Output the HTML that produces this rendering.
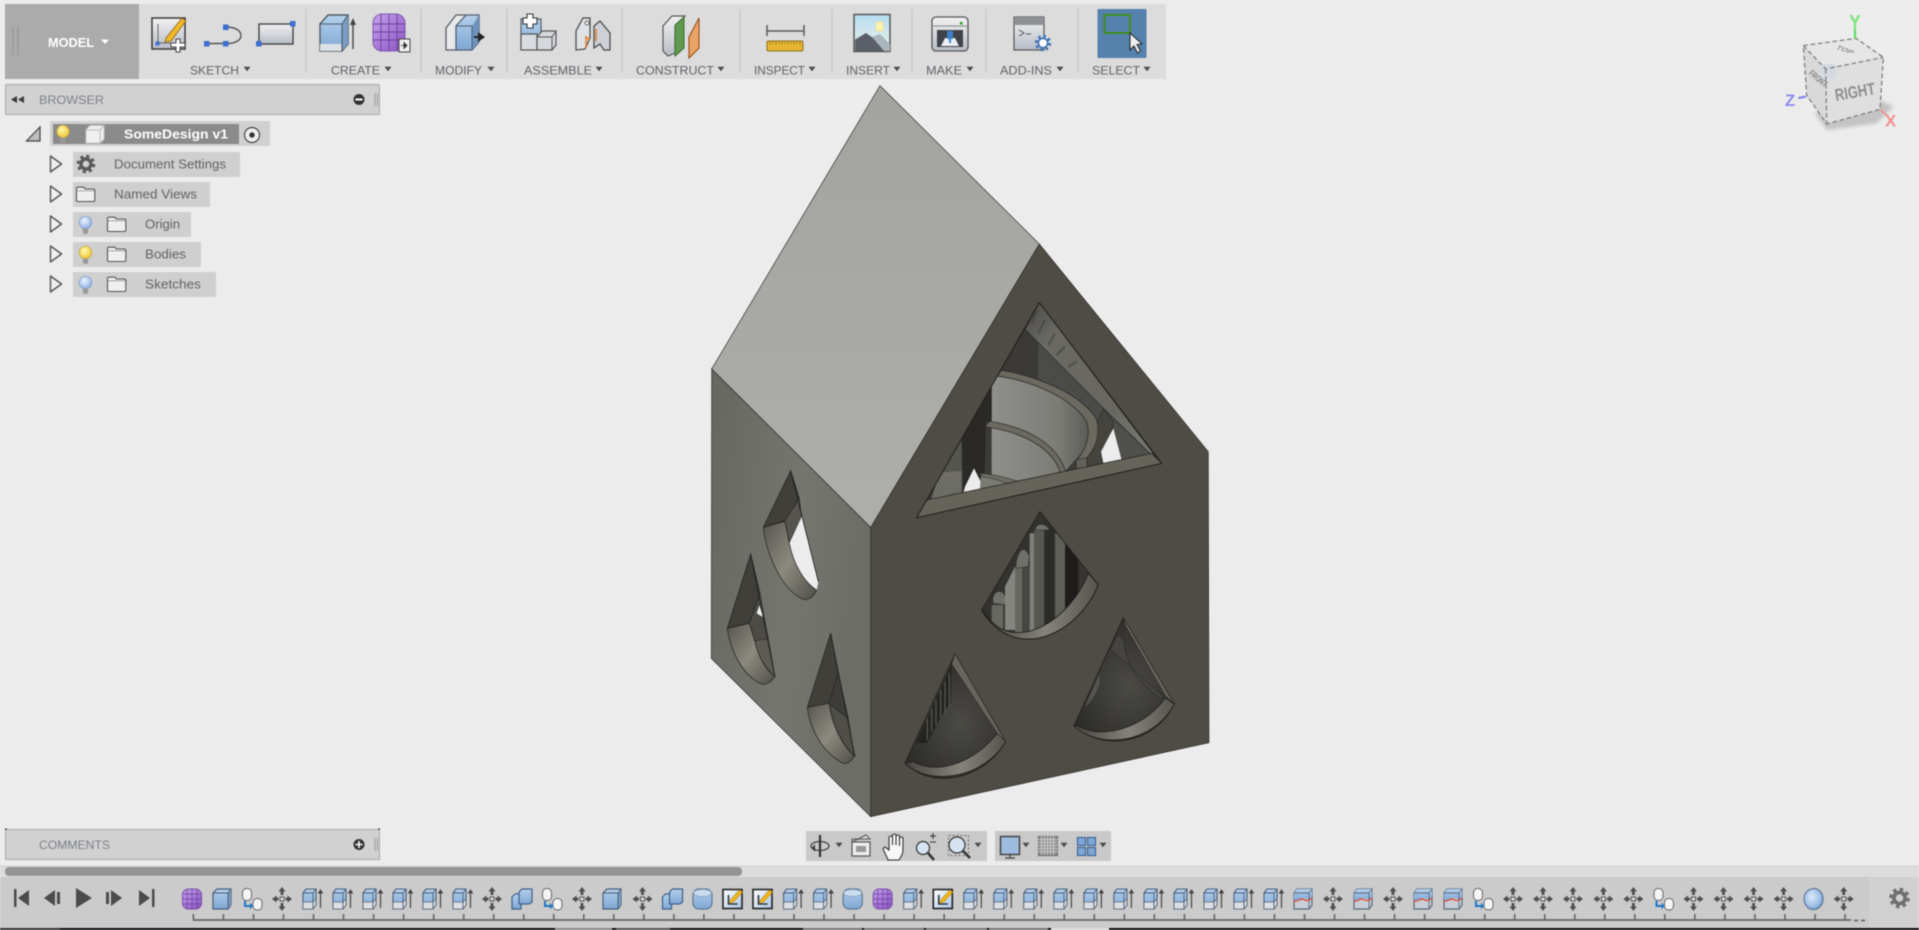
<!DOCTYPE html>
<html lang="en"><head><meta charset="utf-8"><title>SomeDesign v1</title>
<style>
html,body{margin:0;padding:0;background:#ececec;width:1919px;height:930px;overflow:hidden}
svg{display:block;position:absolute;left:0;top:0;filter:blur(.55px)}
text{font-family:"Liberation Sans",sans-serif}
.l{font-size:12px;fill:#5f6268}
.t{font-size:12.5px;fill:#636363}
</style></head><body>
<svg xmlns="http://www.w3.org/2000/svg" width="1919" height="930" viewBox="0 0 1919 930">
<defs>
<linearGradient id="bl" x1="0" y1="0" x2="0" y2="1"><stop offset="0" stop-color="#b4d0ec"/><stop offset="1" stop-color="#7fa8d4"/></linearGradient>
<linearGradient id="gy" x1="0" y1="0" x2="0" y2="1"><stop offset="0" stop-color="#f2f2f2"/><stop offset="1" stop-color="#b7bcc6"/></linearGradient>
<linearGradient id="roof" x1="0" y1="0" x2="0" y2="1"><stop offset="0" stop-color="#a3a39f"/><stop offset="1" stop-color="#aeaeaa"/></linearGradient>
<linearGradient id="lf" x1="0" y1="0" x2="1" y2=".3"><stop offset="0" stop-color="#676761"/><stop offset=".6" stop-color="#767670"/><stop offset="1" stop-color="#6d6d67"/></linearGradient>
<linearGradient id="rim" x1="0" y1="0" x2="1" y2="1"><stop offset="0" stop-color="#56554f"/><stop offset=".5" stop-color="#8c8a7f"/><stop offset="1" stop-color="#4f4e48"/></linearGradient>
<linearGradient id="rim2" x1="0" y1="0" x2="1" y2="0"><stop offset="0" stop-color="#45443e"/><stop offset=".55" stop-color="#85837a"/><stop offset="1" stop-color="#55544d"/></linearGradient>
<linearGradient id="spir" x1="0" y1="0" x2="1" y2="0"><stop offset="0" stop-color="#8f908b"/><stop offset=".7" stop-color="#7b7c76"/><stop offset="1" stop-color="#5c5c57"/></linearGradient>
<radialGradient id="dk" cx=".55" cy=".55" r=".6"><stop offset="0" stop-color="#4b4a45"/><stop offset="1" stop-color="#2d2c29"/></radialGradient>
<linearGradient id="slat" x1="0" y1="0" x2="1" y2="1"><stop offset="0" stop-color="#4a4945"/><stop offset=".22" stop-color="#6a6964"/><stop offset=".7" stop-color="#686761"/><stop offset="1" stop-color="#7a7a74"/></linearGradient>
<radialGradient id="yb" cx=".4" cy=".35" r=".7"><stop offset="0" stop-color="#fff7b0"/><stop offset="1" stop-color="#ecc52e"/></radialGradient>
<radialGradient id="bb" cx=".4" cy=".35" r=".7"><stop offset="0" stop-color="#eef4ff"/><stop offset="1" stop-color="#8cafe6"/></radialGradient>
<radialGradient id="sp" cx=".4" cy=".4" r=".65"><stop offset="0" stop-color="#dbe9f8"/><stop offset=".7" stop-color="#9dbfe6"/><stop offset="1" stop-color="#6d97c9"/></radialGradient>
<linearGradient id="pu" x1="0" y1="0" x2="1" y2="1"><stop offset="0" stop-color="#c5a3ea"/><stop offset="1" stop-color="#8c54c4"/></linearGradient>
<linearGradient id="sk" x1="0" y1="0" x2="1" y2="1"><stop offset="0" stop-color="#fff"/><stop offset="1" stop-color="#a9c6e6"/></linearGradient>
<linearGradient id="sky" x1="0" y1="0" x2="0" y2="1"><stop offset="0" stop-color="#b5dcf2"/><stop offset="1" stop-color="#eef3e4"/></linearGradient>
<pattern id="tick" x="192.6" y="0" width="30.03" height="10" patternUnits="userSpaceOnUse"><rect x="0" y="0" width="1.6" height="10" fill="#666"/></pattern>

<g id="form"><rect x="-9.500" y="-10" width="19" height="20" rx="6" fill="url(#pu)" stroke="#7a4fa8"/><path d="M-9,-5H9M-9,0H9M-9,5H9M-5,-10V10M0,-10V10M5,-10V10" stroke="#6a3fa0" stroke-width=".7" fill="none"/></g>
<g id="box"><path d="M-9,-6L-5,-10H9V6L6,10H-9Z" fill="url(#bl)" stroke="#4a5f78" stroke-width="1.2"/><path d="M6,-6L9,-10V6L6,10Z" fill="#7799c0"/><path d="M-9,-6H6V10M6,-6L9,-10" fill="none" stroke="#4a5f78" stroke-width="1"/></g>
<g id="ext"><path d="M-9,-6L-6,-10H4V6L1,10H-9Z" fill="url(#bl)" stroke="#4a5f78" stroke-width="1.1"/><path d="M-9,3H1L4,0V6L1,10H-9Z" fill="#dcdfe3" stroke="#5a6673" stroke-width=".8"/><path d="M1,-6V10M-9,-6H1L4,-10" fill="none" stroke="#4a5f78" stroke-width=".9"/><path d="M8.500,9V-6" stroke="#444" stroke-width="1.2"/><path d="M5.700,-5.500L8.500,-10L11.300,-5.500Z" fill="#444"/></g>
<g id="mv" fill="#4f4f4f"><rect x="-2" y="-2" width="4" height="4" fill="#ddd" stroke="#555" stroke-width="1"/><path d="M0,-12L3.500,-7.500H1.400V-4H-1.400V-7.500H-3.500ZM0,12L3.500,7.500H1.400V4H-1.400V7.500H-3.500ZM-10,0L-5.500,-3.500V-1.400H-3.500V1.400H-5.500V3.500ZM10,0L5.500,-3.500V-1.400H3.500V1.400H5.500V3.500Z"/></g>
<g id="lnk"><rect x="-9.500" y="-10.500" width="9" height="12" rx="4" fill="#f4f4f4" stroke="#666" stroke-width="1"/><rect x="1" y="-.5" width="9" height="11.500" rx="4" fill="#f4f4f4" stroke="#666" stroke-width="1"/><path d="M-7,2V7H-1" fill="none" stroke="#1f75c8" stroke-width="2"/><path d="M-2,3.500L1,7L-2,10.500Z" fill="#1f75c8"/></g>
<g id="cmb"><path d="M-10,-2L-7,-5H-1V10H-10Z" fill="url(#bl)" stroke="#3f5f88" stroke-width="1.2"/><path d="M-3,-7L0,-10H10V3L7,5H-3Z" fill="url(#bl)" stroke="#3f5f88" stroke-width="1.2"/></g>
<g id="cyl"><rect x="-9.500" y="-10" width="19" height="20" rx="6" fill="url(#bl)" stroke="#5c7590" stroke-width="1.2"/><ellipse cx="0" cy="-6" rx="9" ry="3.600" fill="#c9dcf0" stroke="#7f97b3" stroke-width=".7"/></g>
<g id="skt"><rect x="-9.500" y="-9.500" width="19" height="19" fill="url(#sk)" stroke="#222" stroke-width="1.6"/><path d="M-4,-4V5H5" fill="none" stroke="#333" stroke-width="1.6"/><path d="M-2,1L7,-9L10,-7L1,3L-3,4Z" fill="#f2b81a" stroke="#b98410" stroke-width=".6"/></g>
<g id="red"><path d="M-9,-6L-6,-10H9V6L6,10H-9Z" fill="#c9ced6" stroke="#5a6a7c" stroke-width="1.2"/><path d="M-9,-6L-6,-10H9L9,-1C5,3 3,-2 -1,-1C-4,1 -6,2 -9,1Z" fill="url(#bl)"/><path d="M-9,-6H6V10M6,-6L9,-10" fill="none" stroke="#5a6a7c" stroke-width=".9"/><path d="M-9,2C-6,3 -4,0 -1,0C2,0 3,3 6,1L9,-1" fill="none" stroke="#e0402a" stroke-width="1.2"/></g>
<g id="sph"><ellipse cx="0" cy="0" rx="9.500" ry="10.500" fill="url(#sp)" stroke="#5f7a99" stroke-width="1.2"/></g>
<g id="bulbY"><circle cx="0" cy="-2.500" r="6.200" fill="url(#yb)" stroke="#c8a422" stroke-width=".7"/><path d="M-2.600,3.500H2.600V8L1,9H-1L-2.600,8Z" fill="#999"/></g>
<g id="bulbB"><circle cx="0" cy="-2.500" r="6.200" fill="url(#bb)" stroke="#7393c8" stroke-width=".7"/><path d="M-2.600,3.500H2.600V8L1,9H-1L-2.600,8Z" fill="#999"/></g>
<g id="fld"><path d="M.5,14.500V1.500L1.500,.7H8L9.200,2.500H18L18.800,3.500V14L18,15H1.500Z" fill="#efefef" stroke="#555" stroke-width="1.1"/><path d="M1,4.300H18.500" stroke="#777" stroke-width=".7"/></g>
<g id="exp"><path d="M0,0L11,8L0,16Z" fill="#efefef" stroke="#555" stroke-width="1.400" stroke-linejoin="round"/></g>
<g id="gear" fill="none" stroke="#595959"><circle r="7.800" stroke-width="3" stroke-dasharray="3.100 3.030"/><circle r="5" stroke-width="3.400"/></g>
<g id="arr"><path d="M-3.500,-2.300H3.500L0,2.300Z" fill="#4a4a4a"/></g>
</defs>

<rect width="1919" height="930" fill="#ececec"/>

<!-- HOUSE -->
<polygon points="880,85.700 1039.300,244 870.700,527.500 711.700,369" fill="url(#roof)" stroke="#33332f" stroke-width=".7"/>
<polygon points="711.700,369 870.700,527.500 870.700,816.700 711.300,658.300" fill="url(#lf)" stroke="#2f2f2b" stroke-width=".7"/>
<polygon points="1039.300,244 1208.300,451.700 1209,742.700 870.700,816.700 870.700,527.500" fill="#4f4c45" stroke="#2f2e2a" stroke-width=".7"/>

<!-- triangular window -->
<g transform="translate(940,290) scale(.33333)">
<clipPath id="tw"><polygon points="298,38 665,520 -70,683"/></clipPath>
<polygon points="298,38 665,520 -70,683" fill="#3c3b37" stroke="#1f1e1c" stroke-width="3"/>
<g clip-path="url(#tw)">
<polygon points="295,160 490,355 640,490 530,510 470,390 295,265" fill="#4b4c49"/>
<polygon points="255,118 295,160 295,265 185,240" fill="#3b3a36"/>
<polygon points="520,395 640,490 545,510" fill="#4f504c"/>
<path d="M298,38L255,118L490,355L630,490L640,490Z" fill="url(#slat)" stroke="#222" stroke-width="2"/>
<path d="M290,62L275,100M315,90L295,130M345,130L325,165M375,170L350,195M410,215L385,230" stroke="#3f3e3a" stroke-width="7" opacity=".55"/>
<path d="M155,258L178,258C290,275 400,330 440,395C455,440 430,490 405,510L370,550L250,575L155,590Z" fill="url(#spir)"/>
<path d="M184,241C290,258 420,310 468,385C490,440 460,480 440,505L410,510C430,490 455,440 440,395C400,330 290,275 172,258Z" fill="#6b6960" stroke="#222" stroke-width="2"/>
<path d="M148,394C240,408 350,450 378,548L362,552C340,470 240,425 135,410Z" fill="#6b6960" stroke="#222" stroke-width="2"/>
<polygon points="408,510 440,503 442,530 410,540" fill="#64625a" stroke="#222" stroke-width="1.500"/>
<path d="M490,355L520,395L515,430L483,485L490,520L442,530L440,505C462,480 478,450 472,395Z" fill="#45433e" stroke="#1f1e1c" stroke-width="1.500"/>
<polygon points="520,415 545,510 490,520 483,485" fill="#ececec"/>
<polygon points="155,290 155,395 138,395 135,540 122,570 102,535 90,555 70,612 65,450" fill="#2a2926"/>
<polygon points="102,535 122,575 120,605 68,618 75,590" fill="#ececec"/>
<polygon points="122,550 250,575 120,605" fill="#7a7b75"/>
<path d="M125,550C170,555 210,565 245,578L210,585C180,570 150,562 122,560Z" fill="#6f6d64" stroke="#222" stroke-width="1.500"/>
<polygon points="65,450 5,552 65,540" fill="#55554f"/>
<polygon points="-5,560 65,558 65,625 -30,640" fill="#6d6d67"/>
<polygon points="0,548 65,542 65,558 -8,562" fill="#6f6d64"/>
<polygon points="-70,683 665,520 635,490 -40,630" fill="#66635a" stroke="#1f1e1c" stroke-width="2"/>
</g>
<polygon points="298,38 665,520 -70,683" fill="none" stroke="#1f1e1c" stroke-width="2.500"/>
</g>

<!-- sector holes -->
<g transform="translate(700,450) scale(.33333)">
<!-- A -->
<clipPath id="ha"><path d="M1020,185L1195,405C1130,560 940,640 845,480Z"/></clipPath>
<path d="M1020,185L1195,405C1130,560 940,640 845,480Z" fill="#3a3935"/>
<g clip-path="url(#ha)">
<rect x="840" y="180" width="360" height="400" fill="#33322e"/>
<rect x="875" y="465" width="35" height="90" fill="#686862"/>
<path d="M880,460C870,430 905,405 918,445L918,465Z" fill="#70706a" stroke="#222" stroke-width="1.500"/>
<polygon points="915,410 945,350 945,540 915,540" fill="#858580"/>
<rect x="945" y="350" width="22" height="200" fill="#686862"/>
<rect x="967" y="350" width="22" height="200" fill="#474642"/>
<path d="M948,355C945,320 970,270 988,320L985,350Z" fill="#70706a" stroke="#222" stroke-width="1.500"/>
<rect x="989" y="250" width="14" height="300" fill="#7f7f7a"/>
<rect x="1003" y="240" width="30" height="300" fill="#575752"/>
<rect x="1033" y="230" width="32" height="300" fill="#2c2b28"/>
<rect x="1065" y="250" width="30" height="280" fill="#5f5f59"/>
<rect x="1095" y="290" width="40" height="230" fill="#1e1d1b"/>
<rect x="1135" y="320" width="40" height="170" fill="#363532"/>
<path d="M1005,240C1010,215 1040,220 1048,240Z" fill="#70706a" stroke="#222" stroke-width="1.500"/>
</g>
<path d="M1195,405L1165,370C1110,510 960,600 875,515L845,480C940,640 1130,560 1195,405Z" fill="url(#rim2)" stroke="#1e1d1b" stroke-width="2.500"/>
<path d="M1020,185L1195,405C1130,560 940,640 845,480Z" fill="none" stroke="#1e1d1b" stroke-width="2.500"/>
<!-- B -->
<path d="M765,612L917,875C850,990 700,1020 615,940Z" fill="url(#dk)" stroke="#1e1d1b" stroke-width="2.500"/>
<path d="M755,645L752,760L735,780L680,880L648,878Z" fill="#24231f"/>
<path d="M748,670V770M735,695V790M722,720V805M708,750V825M695,775V845M682,805V870" stroke="#55554f" stroke-width="4"/>
<path d="M765,612L917,875L892,850L755,642Z" fill="#66645c" stroke="#1e1d1b" stroke-width="1.500"/>
<path d="M917,875L892,850C830,930 720,980 640,935L615,940C690,1010 850,985 917,875Z" fill="url(#rim2)" stroke="#1e1d1b" stroke-width="2"/>
<!-- C -->
<path d="M1270,503L1423,762C1360,890 1200,900 1122,828Z" fill="url(#dk)" stroke="#1e1d1b" stroke-width="2.500"/>
<path d="M1232,598L1393,742L1380,745C1310,690 1280,650 1272,570L1252,555Z" fill="#45443f" stroke="#1e1d1b" stroke-width="1.500"/>
<path d="M1198,675C1205,705 1180,750 1155,770L1175,725Z" fill="#55544e"/>
<path d="M1270,503L1423,762L1395,735L1278,530Z" fill="#66645c" stroke="#1e1d1b" stroke-width="1.500"/>
<path d="M1423,762L1395,745C1350,815 1220,880 1130,826L1122,828C1200,900 1360,880 1423,762Z" fill="url(#rim2)" stroke="#1e1d1b" stroke-width="2"/>
<!-- D -->
<path d="M272,62L190,232L255,212L298,145Z" fill="#403f3a" stroke="#1e1d1b" stroke-width="2"/>
<path d="M298,145L255,212L268,278L305,200Z" fill="#55544e" stroke="#1e1d1b" stroke-width="1.500"/>
<path d="M305,200L355,395L350,422C310,395 280,340 268,280Z" fill="#ececec"/>
<path d="M190,232L255,214L268,280C280,340 310,395 350,420Q335,450 312,449C250,425 200,320 190,232Z" fill="url(#rim)" stroke="#1e1d1b" stroke-width="2"/>
<path d="M272,62L355,395" stroke="#1e1d1b" stroke-width="2.500"/>
<!-- E -->
<path d="M152,312L82,534L148,520L180,430Z" fill="#403f3a" stroke="#1e1d1b" stroke-width="2"/>
<path d="M180,430L148,520L165,572L205,566Z" fill="#4c4b46" stroke="#1e1d1b" stroke-width="1.500"/>
<polygon points="178,466 190,502 170,490" fill="#ececec"/>
<path d="M165,572L205,566L225,680C195,650 172,620 165,572Z" fill="#5c5b54" stroke="#1e1d1b" stroke-width="1.500"/>
<path d="M82,535L148,520L165,575C175,625 200,660 225,680Q205,707 185,702C130,680 90,600 82,535Z" fill="url(#rim)" stroke="#1e1d1b" stroke-width="2"/>
<path d="M152,312L225,680" stroke="#1e1d1b" stroke-width="2.500"/>
<!-- F -->
<path d="M392,550L322,772L387,760L415,670Z" fill="#403f3a" stroke="#1e1d1b" stroke-width="2"/>
<path d="M415,670L387,760L445,805Z" fill="#3d3c38" stroke="#1e1d1b" stroke-width="1.500"/>
<path d="M390,765L445,805L463,918C425,880 400,820 390,765Z" fill="#4f4e48" stroke="#1e1d1b" stroke-width="1.500"/>
<path d="M322,772L387,760C395,820 420,880 463,918Q450,942 430,940C370,910 330,840 322,772Z" fill="url(#rim)" stroke="#1e1d1b" stroke-width="2"/>
<path d="M392,550L465,920" stroke="#1e1d1b" stroke-width="2.500"/>
</g>

<!-- TOOLBAR -->
<rect x="5" y="4" width="1161" height="75" fill="#dcdcdc"/>
<rect x="5" y="4" width="134" height="75" fill="#ababab"/>
<path d="M13,27V55M18,27V55" stroke="#979797" stroke-width="1.300"/>
<text x="48" y="47" font-size="12.500" font-weight="bold" fill="#fff" textLength="46" lengthAdjust="spacingAndGlyphs">MODEL</text>
<path d="M101,39.500H109L105,44Z" fill="#fff"/>
<path d="M306,9V73M421,9V73M507,9V73M622,9V73M740,9V73M832,9V73M912,9V73M986,9V73M1078,9V73" stroke="#c6c6c6" stroke-width="1.400"/>
<text class="l" x="190" y="74.500" textLength="49" lengthAdjust="spacingAndGlyphs">SKETCH</text>
<text class="l" x="331" y="74.500" textLength="49" lengthAdjust="spacingAndGlyphs">CREATE</text>
<text class="l" x="435" y="74.500" textLength="47" lengthAdjust="spacingAndGlyphs">MODIFY</text>
<text class="l" x="524" y="74.500" textLength="68" lengthAdjust="spacingAndGlyphs">ASSEMBLE</text>
<text class="l" x="636" y="74.500" textLength="78" lengthAdjust="spacingAndGlyphs">CONSTRUCT</text>
<text class="l" x="754" y="74.500" textLength="51" lengthAdjust="spacingAndGlyphs">INSPECT</text>
<text class="l" x="846" y="74.500" textLength="44" lengthAdjust="spacingAndGlyphs">INSERT</text>
<text class="l" x="926" y="74.500" textLength="36" lengthAdjust="spacingAndGlyphs">MAKE</text>
<text class="l" x="1000" y="74.500" textLength="52" lengthAdjust="spacingAndGlyphs">ADD-INS</text>
<text class="l" x="1092" y="74.500" textLength="48" lengthAdjust="spacingAndGlyphs">SELECT</text>
<use href="#arr" x="247" y="69"/><use href="#arr" x="388" y="69"/><use href="#arr" x="491" y="69"/><use href="#arr" x="599" y="69"/><use href="#arr" x="721" y="69"/><use href="#arr" x="812" y="69"/><use href="#arr" x="897" y="69"/><use href="#arr" x="970" y="69"/><use href="#arr" x="1060" y="69"/><use href="#arr" x="1147" y="69"/>

<!-- sketch icons -->
<rect x="152" y="18" width="33" height="31" fill="url(#gy)" stroke="#3a3a3a" stroke-width="1.500"/>
<path d="M158,24V43H176" fill="none" stroke="#666" stroke-width="1"/>
<path d="M166,38L182,18L186,21L171,41L165,42Z" fill="#f0b72a" stroke="#8a6414" stroke-width=".8"/>
<rect x="155.500" y="41.500" width="4" height="4" fill="#3b6fd0"/>
<path d="M176,39h4v4h5v4h-5v5h-4v-5h-5v-4h5z" fill="#fff" stroke="#444" stroke-width="1"/>
<path d="M206,43.500H226C246,44 246,27 226,27" fill="none" stroke="#555" stroke-width="1.400"/>
<rect x="204" y="41" width="5.500" height="5.500" fill="#3b6fd0"/><rect x="223" y="41" width="5.500" height="5.500" fill="#3b6fd0"/><rect x="223" y="24.500" width="5.500" height="5.500" fill="#3b6fd0"/>
<rect x="259" y="24" width="34" height="20" fill="url(#gy)" stroke="#3a3a3a" stroke-width="1.300"/>
<rect x="256" y="41" width="5.500" height="5.500" fill="#3b6fd0"/><rect x="290" y="21" width="5.500" height="5.500" fill="#3b6fd0"/>

<!-- create -->
<path d="M320,24L328,15H348V44L342,51H320Z" fill="url(#bl)" stroke="#4f5a66" stroke-width="1.400"/>
<path d="M342,24L348,15V44L342,51Z" fill="#7b9cc4"/>
<path d="M320,44H342V51H320Z" fill="#dde0e4"/>
<path d="M320,24H342V51M342,24L348,15" fill="none" stroke="#4f5a66" stroke-width="1.100"/>
<path d="M353,49V24" stroke="#444" stroke-width="1.400"/><path d="M350,25L353,18L356,25Z" fill="#444"/>
<rect x="373" y="14" width="32" height="37" rx="9" fill="url(#pu)" stroke="#8358b2" stroke-width="1"/>
<path d="M373,24H405M373,32H405M373,40H405M381,14V51M389,14V51M397,14V51" stroke="#6b3fa0" stroke-width=".9"/>
<rect x="399" y="39" width="11" height="13" fill="#eee" stroke="#444" stroke-width="1"/><path d="M401,45.500H405M404,42.500L407,45.500L404,48.500Z" fill="#333" stroke="#333" stroke-width=".8"/>

<!-- modify -->
<path d="M446,50V28L456,15H466L458,28V50Z" fill="#e6e8ea" stroke="#5a5f66" stroke-width="1.300"/>
<path d="M456,50V26L466,15H479V42L472,50Z" fill="url(#bl)" stroke="#4f5f75" stroke-width="1.300"/>
<path d="M472,26L479,15V42L472,50Z" fill="#6f93bf"/><path d="M456,26H472V50" fill="none" stroke="#4f5f75"/>
<path d="M474,36h4v-4l7,5l-7,5v-4h-4z" fill="#222"/>

<!-- assemble -->
<rect x="521" y="19" width="20" height="30" fill="url(#bl)" stroke="#5a5f66" stroke-width="1.200"/>
<rect x="521" y="34" width="16" height="16" fill="#d8dbe0" stroke="#555" stroke-width="1.200"/>
<path d="M537,37L542,31H556V45L552,50H537Z" fill="#d5d8dd" stroke="#555" stroke-width="1.200"/><path d="M537,37H552V50M552,37L556,31" fill="none" stroke="#555"/>
<path d="M523,18h4v-4h6v4h4v6h-4v4h-6v-4h-4z" fill="#fff" stroke="#333" stroke-width="1.100"/>
<path d="M576,50V31L583,18H590V38L585,49Z" fill="#dfe2e6" stroke="#444" stroke-width="1.200"/>
<path d="M594,48V26L600,21L610,33V50H604L600,44Z" fill="#cdd1d7" stroke="#444" stroke-width="1.200"/>
<path d="M590,40L586,37M596,29V41M586,36V48" stroke="#e8771e" stroke-width="1.400"/>
<circle cx="587" cy="23" r="2" fill="#eee" stroke="#444" stroke-width=".8"/>

<!-- construct -->
<path d="M663,51V26L672,16H685L675,26V53L668,56Z" fill="url(#gy)" stroke="#555" stroke-width="1.200"/>
<path d="M675,25L684,17V48L675,56Z" fill="#5f9a4e" stroke="#3d6b33" stroke-width="1"/>
<path d="M689,37L699,18V48L689,58Z" fill="#e9a468" stroke="#a0541e" stroke-width="1.200"/>

<!-- inspect -->
<path d="M767,31H804M767,25V36M804,25V36" stroke="#5a5a5a" stroke-width="1.500" fill="none"/>
<rect x="767" y="41" width="36" height="10" rx="1.500" fill="#e8b532" stroke="#8f7020" stroke-width="1"/>
<path d="M770,41v4M773,41v3M776,41v4M779,41v3M782,41v4M785,41v3M788,41v4M791,41v3M794,41v4M797,41v3M800,41v4" stroke="#8f7020" stroke-width=".7"/>

<!-- insert -->
<rect x="854" y="14.500" width="36" height="37" fill="url(#sky)" stroke="#4f4f4f" stroke-width="1.400"/>
<rect x="876" y="22" width="7" height="9" fill="#fdf2a8" stroke="#e7e0b0"/>
<path d="M855,50V39L866,33L872,37L880,34L890,44V51Z" fill="#a9b6bd"/>
<path d="M855,51V40L866,33L873,38L884,51Z" fill="#5b5f68"/>

<!-- make -->
<rect x="932" y="17" width="36" height="34" rx="4" fill="url(#gy)" stroke="#555" stroke-width="1.300"/>
<path d="M932,26H968" stroke="#888"/>
<rect x="937" y="30" width="26" height="17" fill="#3f4247"/>
<path d="M941,46L945,38H955L959,46Z" fill="#eceff2"/>
<rect x="947" y="31" width="6" height="8" fill="#3f80c8"/><path d="M950,39V43" stroke="#3f80c8" stroke-width="2"/>
<rect x="960" y="22" width="2.500" height="2.500" fill="#1fa01f"/>

<!-- add-ins -->
<rect x="1014" y="17" width="30" height="33" fill="url(#gy)" stroke="#555" stroke-width="1.200"/>
<rect x="1014" y="17" width="30" height="8" fill="#8e9096"/>
<path d="M1019,30L1024,33L1019,36M1026,34H1031" fill="none" stroke="#555" stroke-width="1"/>
<g transform="translate(1043,43) scale(.85)"><circle r="8" fill="none" stroke="#3f74b8" stroke-width="3.400" stroke-dasharray="3 3.300"/><circle r="5.500" fill="#fff" stroke="#3f74b8" stroke-width="2"/></g>

<!-- select -->
<rect x="1097.500" y="9" width="49" height="49" rx="1" fill="#5482ad"/>
<rect x="1104.500" y="15" width="25.500" height="18" fill="none" stroke="#3f8f1f" stroke-width="2"/>
<path d="M1130,33V50L1134,46L1137.500,53L1140.500,51L1137,44.500L1142,44Z" fill="#eee" stroke="#222" stroke-width="1"/>

<!-- BROWSER -->
<rect x="5.500" y="84.500" width="374" height="30" rx="1" fill="#d1d1d1" stroke="#a9a9a9"/>
<path d="M11,99.500L17,96V103ZM18,99.500L24,96V103Z" fill="#3a3a3a"/>
<text x="39" y="104" font-size="12" fill="#7d8188" textLength="65" lengthAdjust="spacingAndGlyphs">BROWSER</text>
<circle cx="359" cy="99.500" r="5.500" fill="#333"/><rect x="355.500" y="98.500" width="7" height="2" fill="#fff"/>
<path d="M375,93V106M377.500,93V106" stroke="#9c9c9c"/>

<path d="M26.500,141L40,127V141Z" fill="#bdbdbd" stroke="#444" stroke-width="1.200"/>
<rect x="50" y="121" width="220" height="25" fill="#d0d0d0"/>
<rect x="53" y="124" width="186" height="20" fill="#8b8b8b"/>
<use href="#bulbY" x="63" y="134"/>
<path d="M86,130L90,125.500H104V139L100,143H86Z" fill="#efefef" stroke="#c8c8c8"/><path d="M100,130V143M100,130L104,125.500M86,130H100" stroke="#bbb" fill="none"/>
<text x="124" y="138.500" font-size="12.500" font-weight="bold" fill="#fff" textLength="104" lengthAdjust="spacingAndGlyphs">SomeDesign v1</text>
<circle cx="252" cy="135" r="7.500" fill="#eee" stroke="#444" stroke-width="1.200"/><circle cx="252" cy="135" r="2.700" fill="#333"/>

<g fill="#cfcfcf">
<rect x="73" y="152" width="167" height="25"/><rect x="73" y="182" width="137" height="25"/><rect x="73" y="212" width="118" height="25"/><rect x="73" y="242" width="128" height="25"/><rect x="73" y="272" width="143" height="25"/>
</g>
<use href="#exp" x="50.500" y="156"/><use href="#exp" x="50.500" y="186"/><use href="#exp" x="50.500" y="216"/><use href="#exp" x="50.500" y="246"/><use href="#exp" x="50.500" y="276"/>
<use href="#gear" x="86" y="164"/>
<use href="#fld" x="76" y="186.500"/>
<use href="#bulbB" x="85.500" y="225"/><use href="#fld" x="107" y="216.500"/>
<use href="#bulbY" x="85.500" y="255"/><use href="#fld" x="107" y="246.500"/>
<use href="#bulbB" x="85.500" y="285"/><use href="#fld" x="107" y="276.500"/>
<text class="t" x="114" y="168.500" textLength="112" lengthAdjust="spacingAndGlyphs">Document Settings</text>
<text class="t" x="114" y="198.500" textLength="83" lengthAdjust="spacingAndGlyphs">Named Views</text>
<text class="t" x="145" y="228.500" textLength="35" lengthAdjust="spacingAndGlyphs">Origin</text>
<text class="t" x="145" y="258.500" textLength="41" lengthAdjust="spacingAndGlyphs">Bodies</text>
<text class="t" x="145" y="288.500" textLength="56" lengthAdjust="spacingAndGlyphs">Sketches</text>

<!-- COMMENTS -->
<rect x="5.500" y="829.500" width="374" height="30" fill="#d1d1d1" stroke="#a9a9a9"/>
<path d="M5,829h2M378,829h2" stroke="#222"/>
<text x="39" y="849" font-size="12" fill="#7d8188" textLength="71" lengthAdjust="spacingAndGlyphs">COMMENTS</text>
<circle cx="359" cy="844.500" r="5.500" fill="#333"/><path d="M355.500,844.500h7M359,841v7" stroke="#fff" stroke-width="1.600"/>
<path d="M375,838V851M377.500,838V851" stroke="#9c9c9c"/>

<!-- VIEW BAR -->
<rect x="806" y="831" width="181" height="30" fill="#c9c9c9"/><rect x="995" y="831" width="116" height="30" fill="#c9c9c9"/>
<g transform="translate(820,846)">
<ellipse rx="9" ry="4.500" fill="none" stroke="#444" stroke-width="1.300"/><path d="M0,-11V11" stroke="#333" stroke-width="2.200"/><path d="M-8,2L-5,-2V6Z" fill="#333"/>
</g>
<use href="#arr" x="839" y="845"/>
<path d="M852,842L866,835L870,839H852Z" fill="#ddd" stroke="#555"/><rect x="852" y="842" width="18" height="14" fill="#eee" stroke="#555" stroke-width="1.200"/><rect x="856" y="846" width="10" height="6" fill="#999"/>
<path d="M888,860C885,852 881,848 885,847L889,850V837Q891,835 892.500,837V845V835Q894.500,833 896,835V845V836Q898,834 899.500,836V846V838Q901.500,836 903,838V850C903,855 900,858 899,860Z" fill="#f7f7f7" stroke="#333" stroke-width="1.100"/>
<circle cx="923" cy="848" r="6.500" fill="#d5e3f2" stroke="#333" stroke-width="1.200"/><path d="M928,853L934,860" stroke="#333" stroke-width="2.500"/><path d="M930,836H936M933,833V839M930,842H936" stroke="#333" stroke-width="1.100"/>
<rect x="948.500" y="835.500" width="20" height="20" fill="none" stroke="#666" stroke-width="1" stroke-dasharray="2 2"/><circle cx="957" cy="845" r="8" fill="#d5e3f2" stroke="#333" stroke-width="1.200"/><path d="M963,851L970,858" stroke="#333" stroke-width="2.600"/>
<use href="#arr" x="978" y="845"/>
<rect x="1000.500" y="836.500" width="19" height="18" fill="#9dbde0" stroke="#444" stroke-width="1.500"/><path d="M1005,858H1015M1010,855V858" stroke="#555" stroke-width="1.500"/>
<use href="#arr" x="1026" y="845"/>
<rect x="1038.500" y="836.500" width="19" height="19" fill="#8f8f8f" stroke="#666"/><path d="M1041.500,836V855M1044.500,836V855M1047.500,836V855M1050.500,836V855M1053.500,836V855M1038,839.500H1058M1038,842.500H1058M1038,845.500H1058M1038,848.500H1058M1038,851.500H1058" stroke="#d6d6d6" stroke-width=".8"/>
<use href="#arr" x="1064" y="845"/>
<g fill="#7fa6d4" stroke="#3a5f90" stroke-width="1.100"><rect x="1077.500" y="837.500" width="8" height="8"/><rect x="1087.500" y="837.500" width="8" height="8"/><rect x="1077.500" y="847.500" width="8" height="8"/><rect x="1087.500" y="847.500" width="8" height="8"/></g>
<use href="#arr" x="1103" y="845"/>

<!-- SCROLL & TIMELINE -->
<rect x="0" y="866" width="1919" height="11" fill="#dcdcdc"/>
<rect x="0" y="865.500" width="1919" height="1" fill="#d2d2d2"/>
<rect x="5" y="867" width="737" height="9" rx="4" fill="#949494"/>
<rect x="0" y="877" width="1919" height="51" fill="#cbcbcb"/>
<rect x="1869" y="877" width="50" height="51" fill="#d0d0d0"/>
<g fill="#4b4b4b">
<path d="M14,889h2.500v18H14ZM29,890V906L18,898Z"/>
<path d="M44,898L55,890V906ZM57,892h3v12h-3Z"/>
<path d="M76,888L92,898L76,908Z"/>
<path d="M106,892h3v12h-3ZM111,890L122,898L111,906Z"/>
<path d="M139,890L150,898L139,906ZM152,889h2.500v18H152Z"/>
</g>

<path d="M193,920H1851" stroke="#666" stroke-width="1.800"/>
<rect x="192" y="914" width="1660" height="6" fill="url(#tick)"/>
<path d="M1854,920.500h4M1861,920.500h4" stroke="#666" stroke-width="1.800"/>

<use href="#form" x="192" y="899"/><use href="#box" x="222" y="899"/><use href="#lnk" x="252" y="899"/><use href="#mv" x="282" y="899"/>
<use href="#ext" x="312" y="899"/><use href="#ext" x="342" y="899"/><use href="#ext" x="372" y="899"/><use href="#ext" x="402" y="899"/><use href="#ext" x="432" y="899"/><use href="#ext" x="462" y="899"/>
<use href="#mv" x="492" y="899"/><use href="#cmb" x="522" y="899"/><use href="#lnk" x="552" y="899"/><use href="#mv" x="582" y="899"/><use href="#box" x="612" y="899"/><use href="#mv" x="642.500" y="899"/>
<use href="#cmb" x="672.500" y="899"/><use href="#cyl" x="702.500" y="899"/><use href="#skt" x="732.500" y="899"/><use href="#skt" x="762.500" y="899"/>
<use href="#ext" x="792.600" y="899"/><use href="#ext" x="822.600" y="899"/><use href="#cyl" x="852.700" y="899"/><use href="#form" x="882.700" y="899"/><use href="#ext" x="912.700" y="899"/><use href="#skt" x="942.800" y="899"/>
<use href="#ext" x="972.800" y="899"/><use href="#ext" x="1002.800" y="899"/><use href="#ext" x="1032.800" y="899"/><use href="#ext" x="1062.900" y="899"/><use href="#ext" x="1092.900" y="899"/><use href="#ext" x="1122.900" y="899"/><use href="#ext" x="1153" y="899"/><use href="#ext" x="1183" y="899"/><use href="#ext" x="1213" y="899"/><use href="#ext" x="1243" y="899"/><use href="#ext" x="1273" y="899"/>
<use href="#red" x="1303" y="899"/><use href="#mv" x="1333" y="899"/><use href="#red" x="1363" y="899"/><use href="#mv" x="1393" y="899"/><use href="#red" x="1423" y="899"/><use href="#red" x="1453" y="899"/><use href="#lnk" x="1483" y="899"/>
<use href="#mv" x="1513" y="899"/><use href="#mv" x="1543" y="899"/><use href="#mv" x="1573" y="899"/><use href="#mv" x="1603.400" y="899"/><use href="#mv" x="1633.400" y="899"/><use href="#lnk" x="1663.500" y="899"/>
<use href="#mv" x="1693.500" y="899"/><use href="#mv" x="1723.500" y="899"/><use href="#mv" x="1753.600" y="899"/><use href="#mv" x="1783.600" y="899"/><use href="#sph" x="1813.600" y="899"/><use href="#mv" x="1843.700" y="899"/>

<g transform="translate(1899.500,898)" fill="none" stroke="#6f6f6f"><circle r="8.600" stroke-width="3.400" stroke-dasharray="3.400 3.350"/><circle r="5.600" stroke-width="3.800"/></g>

<!-- bottom strip -->
<rect x="0" y="928" width="1919" height="2" fill="#0c0c0c"/>
<rect x="0" y="928" width="60" height="2" fill="#333"/><rect x="555" y="928" width="57" height="2" fill="#8a8a8a"/><rect x="616" y="928" width="54" height="2" fill="#555"/>
<rect x="803" y="928" width="59" height="2" fill="#777"/><rect x="864" y="928" width="60" height="2" fill="#777"/><rect x="926" y="928" width="61" height="2" fill="#777"/><rect x="989" y="928" width="59" height="2" fill="#777"/><rect x="1051" y="928" width="58" height="2" fill="#ddd"/>

<!-- VIEWCUBE -->
<g transform="translate(1760,0) scale(.33333)">
<polygon points="165,340 200,390 350,370 400,320 360,300" fill="#c4c4c4" style="filter:blur(5px)"/>
<polygon points="130,137 288,115 370,172 360,328 200,372 140,285" fill="#e0e0e0"/>
<polygon points="130,137 288,115 370,172 197,207" fill="#e6e6e6"/>
<polygon points="197,207 370,172 360,328 200,372" fill="#dfdfdf"/>
<polygon points="130,137 197,207 200,372 140,285" fill="#d9d9d9"/>
<rect x="180" y="192" width="48" height="44" rx="8" fill="#d5dae0"/>
<path d="M130,137L288,115L370,172L360,328L200,372L140,285ZM130,137L197,207L370,172M197,207L200,372" fill="none" stroke="#828282" stroke-width="4" stroke-dasharray="14 8"/>
<path d="M285,115V90" stroke="#55e055" stroke-width="6"/>
<path d="M272,45L285,68L298,45M285,68V90" fill="none" stroke="#7fe67f" stroke-width="7"/>
<path d="M138,290L115,294" stroke="#7f7fee" stroke-width="6"/>
<text x="75" y="318" font-size="50" font-weight="bold" fill="#8d8df0">Z</text>
<path d="M360,328L385,350" stroke="#ee9a9a" stroke-width="6"/>
<text x="375" y="380" font-size="50" font-weight="bold" fill="#f09090">X</text>
<text x="0" y="0" font-size="46" font-weight="bold" fill="#8e8e8e" transform="translate(228,303) rotate(-10) scale(.85,1.100)">RIGHT</text>
<text x="0" y="0" font-size="26" font-weight="bold" fill="#8f8f8f" transform="translate(225,145) rotate(20) skewX(-30) scale(1,.7)">TOP</text>
<text x="0" y="0" font-size="26" font-weight="bold" fill="#848484" transform="translate(145,222) rotate(40) scale(.7,1)">FRONT</text>
</g>
</svg>
</body></html>
